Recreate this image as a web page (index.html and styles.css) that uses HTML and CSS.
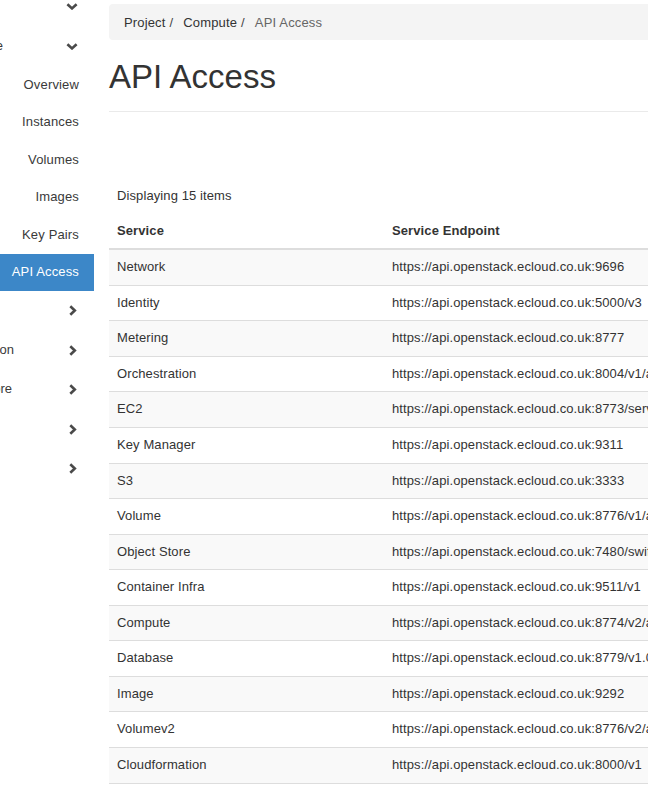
FILE: index.html
```html
<!DOCTYPE html>
<html lang="en">
<head>
<meta charset="utf-8">
<title>API Access</title>
<link rel="stylesheet" href="styles.css">
</head>
<body>
<div class="layout">
  <nav class="sidebar">
    <div class="nav-list">
      <div class="nav-cat">
        <span class="cat-label lbl-none"></span>
        <svg class="chev-down" viewBox="0 0 12 7" width="12" height="7"><polyline points="1.4,1.2 6,5.4 10.6,1.2"/></svg>
      </div>
      <div class="nav-cat">
        <span class="cat-label lbl-compute"><span>Compute</span></span>
        <svg class="chev-down" viewBox="0 0 12 7" width="12" height="7"><polyline points="1.4,1.2 6,5.4 10.6,1.2"/></svg>
      </div>
      <a class="nav-item">Overview</a>
      <a class="nav-item">Instances</a>
      <a class="nav-item">Volumes</a>
      <a class="nav-item">Images</a>
      <a class="nav-item">Key Pairs</a>
      <a class="nav-item active">API Access</a>
      <div class="nav-cat">
        <span class="cat-label lbl-none"></span>
        <svg class="chev-right" viewBox="0 0 8 11" width="8" height="11"><polyline points="1.3,1.2 5.8,5.5 1.3,9.8"/></svg>
      </div>
      <div class="nav-cat">
        <span class="cat-label lbl-orch"><span>Orchestration</span></span>
        <svg class="chev-right" viewBox="0 0 8 11" width="8" height="11"><polyline points="1.3,1.2 5.8,5.5 1.3,9.8"/></svg>
      </div>
      <div class="nav-cat">
        <span class="cat-label lbl-store"><span>Object Store</span></span>
        <svg class="chev-right" viewBox="0 0 8 11" width="8" height="11"><polyline points="1.3,1.2 5.8,5.5 1.3,9.8"/></svg>
      </div>
      <div class="nav-cat">
        <span class="cat-label lbl-none"></span>
        <svg class="chev-right" viewBox="0 0 8 11" width="8" height="11"><polyline points="1.3,1.2 5.8,5.5 1.3,9.8"/></svg>
      </div>
      <div class="nav-cat">
        <span class="cat-label lbl-none"></span>
        <svg class="chev-right" viewBox="0 0 8 11" width="8" height="11"><polyline points="1.3,1.2 5.8,5.5 1.3,9.8"/></svg>
      </div>
    </div>
  </nav>

  <main class="content">
    <ol class="breadcrumb">
      <li>Project</li>
      <li>Compute</li>
      <li class="current">API Access</li>
    </ol>
    <div class="page-header">
      <h1>API Access</h1>
    </div>

    <table class="table">
      <colgroup>
        <col class="col-service">
        <col>
      </colgroup>
      <thead>
        <tr class="caption-row"><th colspan="2">Displaying 15 items</th></tr>
        <tr class="head-row"><th>Service</th><th>Service Endpoint</th></tr>
      </thead>
      <tbody>
        <tr><td>Network</td><td>https://api.openstack.ecloud.co.uk:9696</td></tr>
        <tr><td>Identity</td><td>https://api.openstack.ecloud.co.uk:5000/v3</td></tr>
        <tr><td>Metering</td><td>https://api.openstack.ecloud.co.uk:8777</td></tr>
        <tr><td>Orchestration</td><td>https://api.openstack.ecloud.co.uk:8004/v1/a</td></tr>
        <tr><td>EC2</td><td>https://api.openstack.ecloud.co.uk:8773/services/Cloud</td></tr>
        <tr><td>Key Manager</td><td>https://api.openstack.ecloud.co.uk:9311</td></tr>
        <tr><td>S3</td><td>https://api.openstack.ecloud.co.uk:3333</td></tr>
        <tr><td>Volume</td><td>https://api.openstack.ecloud.co.uk:8776/v1/a</td></tr>
        <tr><td>Object Store</td><td>https://api.openstack.ecloud.co.uk:7480/swift/v1</td></tr>
        <tr><td>Container Infra</td><td>https://api.openstack.ecloud.co.uk:9511/v1</td></tr>
        <tr><td>Compute</td><td>https://api.openstack.ecloud.co.uk:8774/v2/a</td></tr>
        <tr><td>Database</td><td>https://api.openstack.ecloud.co.uk:8779/v1.0/a</td></tr>
        <tr><td>Image</td><td>https://api.openstack.ecloud.co.uk:9292</td></tr>
        <tr><td>Volumev2</td><td>https://api.openstack.ecloud.co.uk:8776/v2/a</td></tr>
        <tr><td>Cloudformation</td><td>https://api.openstack.ecloud.co.uk:8000/v1</td></tr>
      </tbody>
    </table>
  </main>
</div>
</body>
</html>
```

FILE: styles.css
```css
html, body {
  margin: 0;
  padding: 0;
  overflow: hidden;
  background: #fff;
}

body {
  font-family: "Liberation Sans", Arial, Helvetica, sans-serif;
  font-size: 13px;
  line-height: 1.42857;
  color: #333;
}

.layout {
  display: flex;
  align-items: flex-start;
  width: 1000px;
}

/* ---------- sidebar ---------- */
.sidebar {
  flex: 0 0 94px;
  width: 94px;
  overflow: hidden;
}

.nav-list {
  display: flex;
  flex-direction: column;
  margin-top: -13px;
}

.nav-cat {
  height: 39.5px;
  display: flex;
  align-items: center;
  color: #3a3a3a;
}

.cat-label {
  display: flex;
  justify-content: flex-end;
  overflow: hidden;
  white-space: nowrap;
  flex: 0 0 auto;
}

.lbl-none { width: 0; }
.lbl-compute { width: 3px; }
.lbl-orch { width: 14px; }
.lbl-store { width: 12px; }

.chev-down,
.chev-right {
  margin-left: auto;
  fill: none;
  stroke: #4a4a4a;
  stroke-width: 2.6;
  stroke-linecap: butt;
  stroke-linejoin: miter;
}

.chev-down { margin-right: 16px; }
.chev-right { margin-right: 17px; }

.nav-item {
  height: 37.5px;
  display: flex;
  align-items: center;
  justify-content: flex-end;
  padding-right: 15px;
  padding-top: 1px;
  box-sizing: border-box;
  color: #3a3a3a;
  text-decoration: none;
  white-space: nowrap;
  letter-spacing: 0.15px;
}

.nav-item.active {
  background: #3c87c8;
  color: #fff;
}

/* ---------- content ---------- */
.content {
  flex: 0 0 880px;
  width: 880px;
  margin-left: 15px;
}

.breadcrumb {
  display: flex;
  list-style: none;
  margin: 4px 0 17px;
  padding: 9px 15px 7px;
  background: #f4f4f4;
  border-radius: 4px;
  line-height: 20px;
  letter-spacing: 0.15px;
}

.breadcrumb li + li::before {
  content: "/";
  padding: 0 10px 0 4px;
  color: #444;
}

.breadcrumb .current {
  color: #666;
}

.page-header {
  padding-top: 2px;
  padding-bottom: 16px;
  border-bottom: 1px solid #eaeaea;
  margin-bottom: 67px;
}

.page-header h1 {
  margin: 0;
  font-size: 33px;
  line-height: 36px;
  font-weight: normal;
  color: #333;
}

.table {
  width: 100%;
  table-layout: fixed;
  border-collapse: collapse;
  border-spacing: 0;
  letter-spacing: 0.1px;
}

.col-service { width: 275px; }

.table th,
.table td {
  padding: 8px;
  text-align: left;
  vertical-align: top;
  white-space: nowrap;
  overflow: hidden;
}

.caption-row th {
  font-weight: normal;
  border: 0;
}

.head-row th {
  font-weight: bold;
  border-bottom: 2px solid #ddd;
}

.table tbody td {
  border-top: 1px solid #ddd;
}

.table tbody tr:nth-child(odd) td {
  background: #f9f9f9;
}

.table tbody tr:last-child td {
  border-bottom: 1px solid #ddd;
}
```
